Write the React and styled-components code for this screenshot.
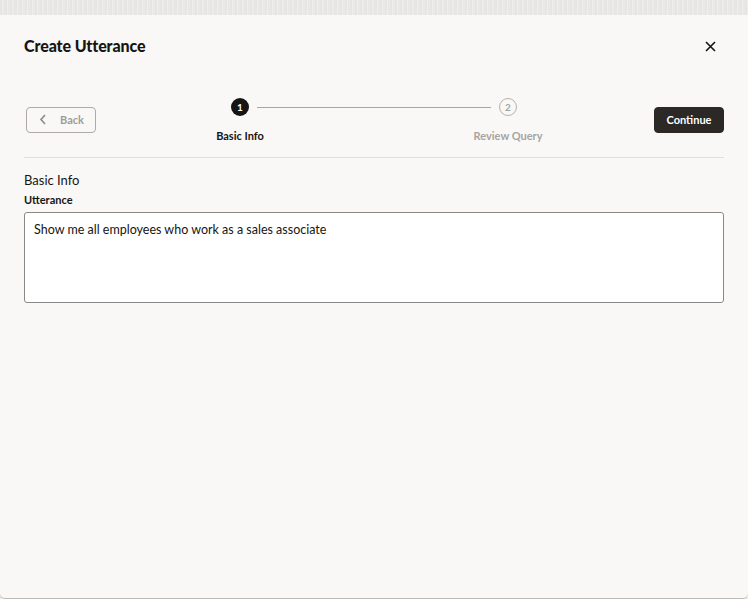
import * as React from "react"
import styled, { createGlobalStyle } from "styled-components"

const GlobalStyle = createGlobalStyle`
  html, body {
    margin: 0;
    padding: 0;
    height: 100%;
  }
  body {
    background: repeating-linear-gradient(90deg, #e6e5e3 0 2px, #efeeec 2px 3px, #e9e8e6 3px 5px);
    font-family: Lato, "Noto Sans", sans-serif;
    color: #161513;
  }
`

const Dialog = styled.div`
  box-sizing: border-box;
  margin-top: 15px;
  height: 584px;
  background: #f9f8f6;
  border-bottom: 1px solid #bdbab6;
  border-radius: 0 0 5px 5px;
  padding: 0 24px;
  display: flex;
  flex-direction: column;
`

const Header = styled.div`
  display: flex;
  align-items: center;
  justify-content: space-between;
  height: 20px;
  margin-top: 21px;
`

const Title = styled.h1`
  margin: 0;
  font-size: 16px;
  font-weight: 900;
  line-height: 20px;
  letter-spacing: -0.1px;
`

const CloseButton = styled.button`
  border: none;
  background: none;
  padding: 0;
  width: 20px;
  height: 20px;
  margin-right: 4px;
  display: flex;
  align-items: center;
  justify-content: center;
  color: #161513;
  cursor: pointer;
`

const Toolbar = styled.div`
  display: flex;
  align-items: center;
  margin-top: 42px;
  padding: 0 0 16px 2px;
  border-bottom: 1px solid #e2dfdb;
`

const Button = styled.button`
  box-sizing: border-box;
  width: 70px;
  height: 26px;
  border-radius: 4px;
  font-family: inherit;
  font-size: 11px;
  font-weight: 700;
  display: flex;
  align-items: center;
  justify-content: ${p => (p.$primary ? "center" : "flex-start")};
  gap: 13px;
  padding: ${p => (p.$primary ? "0" : "0 0 0 12px")};
  border: 1px solid ${p => (p.$primary ? "#2b2826" : "#aeaba7")};
  background: ${p => (p.$primary ? "#2b2826" : "transparent")};
  color: ${p => (p.$primary ? "#ffffff" : "#a09d99")};
`

const Stepper = styled.div`
  flex: 1;
  display: flex;
  align-items: flex-start;
  padding: 0 137px 0 135px;
  height: 43px;
`

const Step = styled.div`
  width: 18px;
  display: flex;
  flex-direction: column;
  align-items: center;
  gap: 13px;
`

const Circle = styled.div`
  box-sizing: border-box;
  width: 18px;
  height: 18px;
  border-radius: 50%;
  display: flex;
  align-items: center;
  justify-content: center;
  font-size: 10px;
  font-weight: 700;
  background: ${p => (p.$active ? "#161513" : "transparent")};
  color: ${p => (p.$active ? "#ffffff" : "#a7a4a0")};
  border: ${p => (p.$active ? "none" : "1.5px solid #b5b2ae")};
`

const StepLabel = styled.span`
  white-space: nowrap;
  font-size: 11px;
  font-weight: 700;
  line-height: 14px;
  color: ${p => (p.$active ? "#161513" : "#a7a4a0")};
`

const Connector = styled.div`
  flex: 1;
  height: 1px;
  background: #a9a6a2;
  margin: 8.5px 8px 0;
`

const Section = styled.div`
  margin-top: 14px;
  display: flex;
  flex-direction: column;
`

const SectionTitle = styled.h2`
  margin: 0;
  font-size: 13px;
  font-weight: 400;
  line-height: 16px;
`

const FieldLabel = styled.label`
  margin-top: 5px;
  font-size: 11px;
  font-weight: 700;
  line-height: 14px;
`

const TextArea = styled.textarea`
  box-sizing: border-box;
  margin-top: 5px;
  width: 100%;
  height: 91px;
  resize: none;
  border: 1px solid #8b8885;
  border-radius: 3px;
  background: #ffffff;
  padding: 8px 9px;
  font-family: inherit;
  font-size: 12.5px;
  line-height: 18px;
  color: #161513;
  outline: none;
`

const App = () => {
  return (
    <>
      <GlobalStyle />
      <Dialog>
        <Header>
          <Title>Create Utterance</Title>
          <CloseButton aria-label="Close">
            <svg width="11" height="11" viewBox="0 0 11 11">
              <path d="M1 1 L10 10 M10 1 L1 10" stroke="currentColor" strokeWidth="1.6" />
            </svg>
          </CloseButton>
        </Header>
        <Toolbar>
          <Button>
            <svg width="8" height="11" viewBox="0 0 8 11">
              <path d="M6 1 L2 5.5 L6 10" fill="none" stroke="#8d8a86" strokeWidth="1.6" />
            </svg>
            <span>Back</span>
          </Button>
          <Stepper>
            <Step>
              <Circle $active>1</Circle>
              <StepLabel $active>Basic Info</StepLabel>
            </Step>
            <Connector />
            <Step>
              <Circle>2</Circle>
              <StepLabel>Review Query</StepLabel>
            </Step>
          </Stepper>
          <Button $primary>Continue</Button>
        </Toolbar>
        <Section>
          <SectionTitle>Basic Info</SectionTitle>
          <FieldLabel>Utterance</FieldLabel>
          <TextArea defaultValue="Show me all employees who work as a sales associate" />
        </Section>
      </Dialog>
    </>
  )
}

export default App
